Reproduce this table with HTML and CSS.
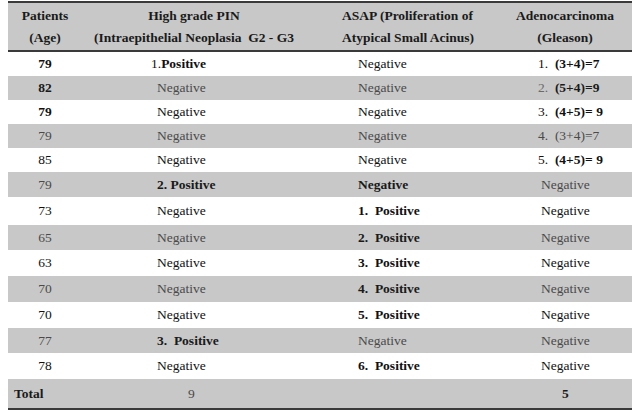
FILE: index.html
```html
<!DOCTYPE html>
<html>
<head>
<meta charset="utf-8">
<link rel="stylesheet" href="styles.css">
</head>
<body>
<table class="data">
  <colgroup>
    <col class="c1"><col class="c2"><col class="c3"><col class="c4">
  </colgroup>
  <thead>
    <tr>
      <th class="h1">Patients<br>(Age)</th>
      <th class="h2">High grade PIN<br>(Intraepithelial Neoplasia&nbsp; G2 - G3</th>
      <th class="h3">ASAP (Proliferation of<br>Atypical Small Acinus)</th>
      <th class="h4">Adenocarcinoma<br>(Gleason)</th>
    </tr>
  </thead>
  <tbody>
    <tr><td class="age b">79</td><td class="pin"><span class="n1">1.</span><b>Positive</b></td><td class="asap">Negative</td><td class="gl">1.&nbsp; <b>(3+4)=7</b></td></tr>
    <tr class="g"><td class="age b">82</td><td class="pin">Negative</td><td class="asap">Negative</td><td class="gl"><span class="lt">2.</span>&nbsp; <b>(5+4)=9</b></td></tr>
    <tr><td class="age b">79</td><td class="pin">Negative</td><td class="asap">Negative</td><td class="gl">3.&nbsp; <b>(4+5)= 9</b></td></tr>
    <tr class="g"><td class="age">79</td><td class="pin">Negative</td><td class="asap">Negative</td><td class="gl">4.&nbsp; (3+4)=7</td></tr>
    <tr><td class="age">85</td><td class="pin">Negative</td><td class="asap">Negative</td><td class="gl">5.&nbsp; <b>(4+5)= 9</b></td></tr>
    <tr class="g"><td class="age">79</td><td class="pin"><b>2. Positive</b></td><td class="asap"><b>Negative</b></td><td class="neg">Negative</td></tr>
    <tr><td class="age">73</td><td class="pin">Negative</td><td class="asap"><b>1.&nbsp; Positive</b></td><td class="neg">Negative</td></tr>
    <tr class="g"><td class="age">65</td><td class="pin">Negative</td><td class="asap"><b>2.&nbsp; Positive</b></td><td class="neg">Negative</td></tr>
    <tr><td class="age">63</td><td class="pin">Negative</td><td class="asap"><b>3.&nbsp; Positive</b></td><td class="neg">Negative</td></tr>
    <tr class="g"><td class="age">70</td><td class="pin">Negative</td><td class="asap"><b>4.&nbsp; Positive</b></td><td class="neg">Negative</td></tr>
    <tr><td class="age">70</td><td class="pin">Negative</td><td class="asap"><b>5.&nbsp; Positive</b></td><td class="neg">Negative</td></tr>
    <tr class="g"><td class="age">77</td><td class="pin"><b>3.&nbsp; Positive</b></td><td class="asap">Negative</td><td class="neg">Negative</td></tr>
    <tr><td class="age">78</td><td class="pin">Negative</td><td class="asap"><b>6.&nbsp; Positive</b></td><td class="neg">Negative</td></tr>
    <tr class="g total"><td class="age b tot">Total</td><td class="pin9">9</td><td class="asap"></td><td class="five"><b>5</b></td></tr>
  </tbody>
</table>
</body>
</html>
```
FILE: styles.css
```css
html, body {
  background: #ffffff;
}
body {
  margin: 1px 8px 0 8px;
  font-family: "Liberation Serif", "Times New Roman", serif;
  font-size: 13.5px;
  color: #111111;
}
.data {
  width: 624px;
  border-collapse: collapse;
  table-layout: fixed;
  border-top: 2px solid #3a3a3a;
  border-bottom: 2px solid #3a3a3a;
}
.c1 { width: 74px; }
.c2 { width: 218px; }
.c3 { width: 198px; }
.c4 { width: 134px; }
thead tr {
  background: #c8c8c8;
  border-bottom: 2px solid #3a3a3a;
}
th {
  height: 47px;
  padding: 0;
  font-weight: bold;
  line-height: 22px;
  text-align: center;
  vertical-align: middle;
  color: #1a1a1a;
  white-space: nowrap;
}
.h2 { padding-left: 6px; }
.h3 { text-align: left; padding-left: 42px; }
td {
  height: 25px;
  padding: 0;
  line-height: 16px;
  vertical-align: middle;
  white-space: nowrap;
}
tbody tr:nth-child(1) td { height: 24px; }
tbody tr:nth-child(2) td { height: 24px; }
tbody tr:nth-child(3) td { height: 24px; }
tbody tr:nth-child(4) td { height: 24px; }
tbody tr:nth-child(5) td { height: 24px; }
tbody tr:nth-child(6) td { height: 25px; }
tbody tr:nth-child(7) td { height: 28px; }
tbody tr:nth-child(8) td { height: 25px; }
tbody tr:nth-child(9) td { height: 26px; }
tbody tr:nth-child(10) td { height: 26px; }
tbody tr:nth-child(11) td { height: 26px; }
tbody tr:nth-child(12) td { height: 25px; }
tbody tr:nth-child(13) td { height: 26px; }
tbody tr:nth-child(14) td { height: 29px; }
tr.g { background: #c8c8c8; }
tr.g td { color: #4a4a4a; }
tr.g td b, tr.g td.b { color: #1a1a1a; }
.b { font-weight: bold; }
.age { text-align: center; }
.tot { text-align: left; padding-left: 6px; }
.pin { padding-left: 75px; }
.n1 { margin-left: -6px; }
.pin9 { text-align: left; padding-left: 106px; }
.asap { padding-left: 58px; }
.gl { padding-left: 40px; }
.neg { padding-left: 43px; }
.five { padding-left: 64px; }
.lt { color: #6a6a6a; }
```
